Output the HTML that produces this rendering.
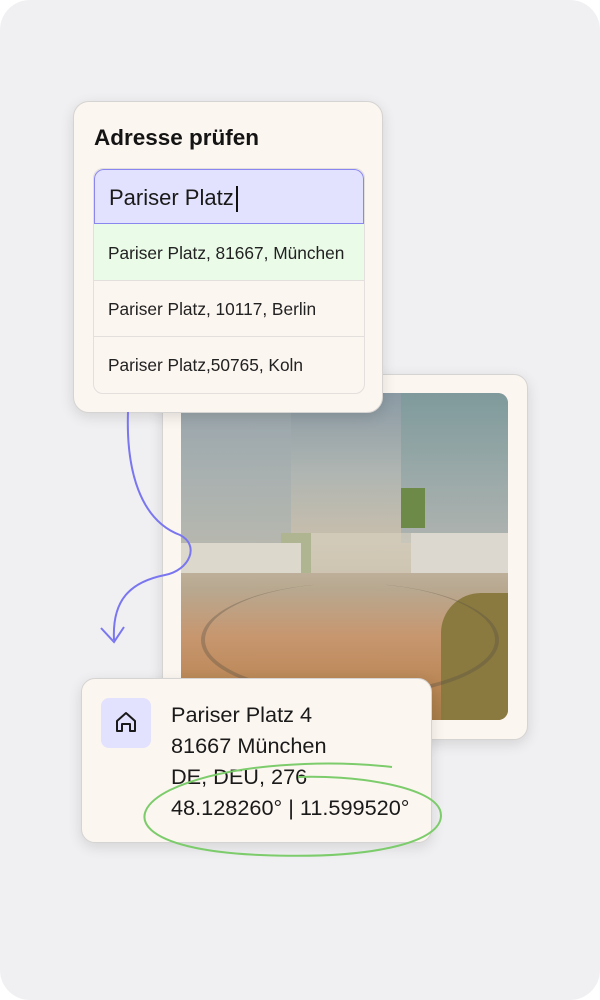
<!DOCTYPE html>
<html><head><style>
body{margin:0;width:600px;height:1000px;background:#fff;font-family:"Liberation Sans",sans-serif;position:relative;overflow:hidden}
.bg{position:absolute;left:0;top:0;width:600px;height:1000px;border-radius:30px;background:#f0f0f2}
.card{position:absolute;background:#fcf6f0;border:1px solid #d6d4d2;box-shadow:0 4px 14px rgba(0,0,0,.12)}
.photo{position:absolute;left:181px;top:393px;width:327px;height:327px;border-radius:10px;overflow:hidden;
background:linear-gradient(180deg,#8a9aa4 0%,#b0b6b2 25%,#c8beac 45%,#b8a890 60%,#c8966e 75%,#b88654 90%,#a67c48 100%)}
</style></head><body>
<div class="bg"></div>
<div class="card" style="left:162px;top:374px;width:364px;height:364px;border-radius:14px"></div>
<div class="photo">
 <div style="position:absolute;left:0;top:0;width:110px;height:170px;background:linear-gradient(#9aa6ae,#b4b8b0);opacity:.8"></div>
 <div style="position:absolute;left:220px;top:0;width:107px;height:150px;background:linear-gradient(#7c9a9a,#a8b0b0);opacity:.8"></div>
 <div style="position:absolute;left:100px;top:140px;width:30px;height:40px;background:#6e8a48"></div>
 <div style="position:absolute;left:220px;top:95px;width:24px;height:40px;background:#6e8a48"></div>
 <div style="position:absolute;left:100px;top:140px;width:130px;height:40px;background:#d8d2c2;opacity:.6"></div>
 <div style="position:absolute;left:0;top:150px;width:120px;height:30px;background:#dcd8cc"></div>
 <div style="position:absolute;left:230px;top:140px;width:97px;height:40px;background:#dcd8d0"></div>
 <div style="position:absolute;left:260px;top:200px;width:67px;height:127px;background:#8a7a40;border-radius:40px 0 0 0"></div>
 <div style="position:absolute;left:20px;top:190px;width:290px;height:110px;border:4px solid rgba(90,80,70,.35);border-radius:50%;border-top:none"></div>
</div>
<div class="card" style="left:73px;top:101px;width:308px;height:310px;border-radius:16px">
 <div style="position:absolute;left:20px;top:23px;font-weight:bold;font-size:22.5px;color:#141414">Adresse prüfen</div>
 <div style="position:absolute;left:19px;top:66px;width:270px;height:224px;border:1px solid #e2dfdc;border-radius:10px;overflow:hidden;background:#fcf6f0">
  <div style="height:55px;background:#e2e2fe;border:1.5px solid #8a86f0;border-radius:10px 10px 0 0;box-sizing:border-box;font-size:22px;color:#1a1a1a;line-height:55px;padding-left:14px">Pariser Platz<span style="display:inline-block;width:2px;height:26px;background:#111;vertical-align:middle;margin-left:2px"></span></div>
  <div style="height:56px;background:#eafbe8;border-bottom:1px solid #e2dfdc;line-height:58px;padding-left:14px;font-size:17.3px;color:#222">Pariser Platz, 81667, München</div>
  <div style="height:55px;border-bottom:1px solid #e2dfdc;line-height:56px;padding-left:14px;font-size:17.3px;color:#222">Pariser Platz, 10117, Berlin</div>
  <div style="height:55px;line-height:56px;padding-left:14px;font-size:17.3px;color:#222">Pariser Platz,50765, Koln</div>
 </div>
</div>
<svg style="position:absolute;left:0;top:0" width="600" height="1000">
 <path d="M128 412 C126 470 140 520 180 535 C200 545 190 570 165 575 C130 582 112 600 114 640" fill="none" stroke="#7a76f0" stroke-width="2"/>
 <path d="M101 628 L114 642 L124 627" fill="none" stroke="#7a76f0" stroke-width="2"/>
</svg>
<div class="card" style="left:81px;top:678px;width:349px;height:163px;border-radius:14px">
 <div style="position:absolute;left:19px;top:19px;width:50px;height:50px;border-radius:8px;background:#e2e2fe">
  <svg width="50" height="50" viewBox="0 0 50 50"><path d="M16 33 V23 L25 15 L34 23 V33 H29 V26 H21 V33 Z" fill="none" stroke="#1a1a1a" stroke-width="2" stroke-linejoin="round"/></svg>
 </div>
 <div style="position:absolute;left:89px;top:20px;font-size:21.7px;line-height:31px;color:#1a1a1a">Pariser Platz 4<br>81667 München<br>DE, DEU, 276<br>48.128260° | 11.599520°</div>
</div>
<svg style="position:absolute;left:0;top:0" width="600" height="1000">
 <path d="M392 767 C330 760 230 762 170 790 C120 815 140 850 260 855 C380 860 450 840 440 810 C430 785 350 775 298 777" fill="none" stroke="#7ccc6c" stroke-width="2"/>
</svg>
</body></html>
